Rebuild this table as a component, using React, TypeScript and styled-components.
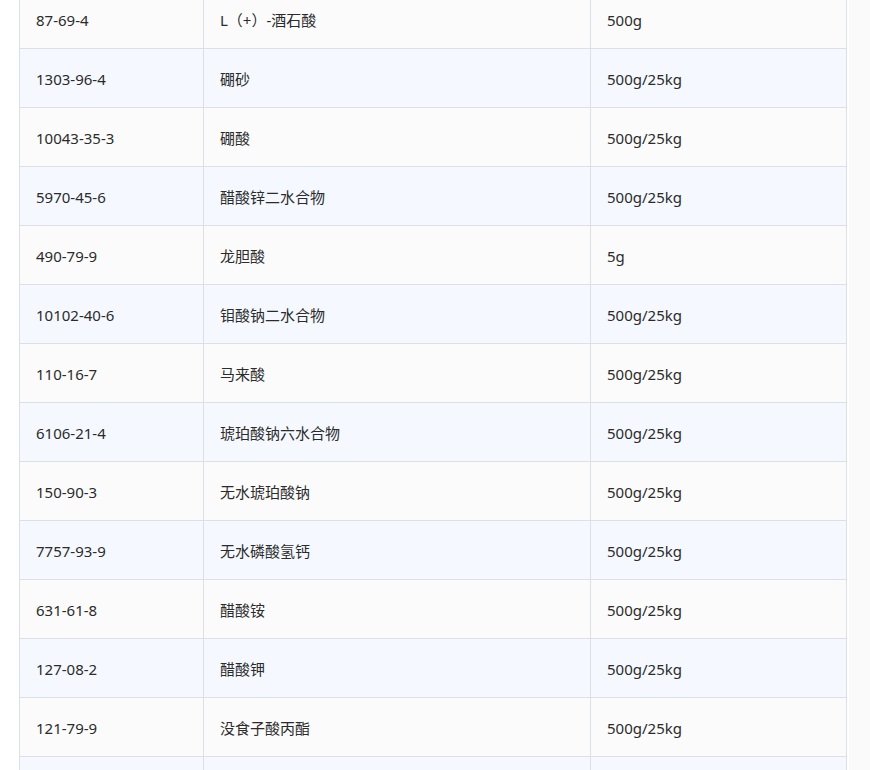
import React from "react";
import styled, { createGlobalStyle } from "styled-components";

const Global = createGlobalStyle`
  html, body { margin: 0; padding: 0; background: #fafafa; overflow: hidden; }
  body { font-family: "Noto Sans", "Noto Sans CJK SC", sans-serif; }
`;

const Page = styled.div`
  width: 849px;
  background: #ffffff;
  padding-left: 19px;
  box-sizing: border-box;
  height: 770px;
  overflow: hidden;
`;

const Table = styled.table`
  margin-top: -11px;
  width: 827px;
  border-collapse: collapse;
  table-layout: fixed;
  font-size: 15px;
  color: #2b2b2b;
`;

const Row = styled.tr<{ $alt: boolean }>`
  background: ${(p) => (p.$alt ? "#f5f9ff" : "#fbfbfb")};
`;

const Cell = styled.td`
  border: 1px solid #dcdfe6;
  height: 59px;
  padding: 2px 16px 0 16px;
  box-sizing: border-box;
  vertical-align: middle;
  line-height: 20px;
  white-space: nowrap;
`;

const rows: [string, string, string][] = [
  ["87-69-4", "L（+）-酒石酸", "500g"],
  ["1303-96-4", "硼砂", "500g/25kg"],
  ["10043-35-3", "硼酸", "500g/25kg"],
  ["5970-45-6", "醋酸锌二水合物", "500g/25kg"],
  ["490-79-9", "龙胆酸", "5g"],
  ["10102-40-6", "钼酸钠二水合物", "500g/25kg"],
  ["110-16-7", "马来酸", "500g/25kg"],
  ["6106-21-4", "琥珀酸钠六水合物", "500g/25kg"],
  ["150-90-3", "无水琥珀酸钠", "500g/25kg"],
  ["7757-93-9", "无水磷酸氢钙", "500g/25kg"],
  ["631-61-8", "醋酸铵", "500g/25kg"],
  ["127-08-2", "醋酸钾", "500g/25kg"],
  ["121-79-9", "没食子酸丙酯", "500g/25kg"],
  ["", "", ""],
];

export default function App() {
  return (
    <>
      <Global />
      <Page>
        <Table>
          <colgroup>
            <col style={{ width: 184 }} />
            <col style={{ width: 387 }} />
            <col style={{ width: 256 }} />
          </colgroup>
          <tbody>
            {rows.map((r, i) => (
              <Row key={i} $alt={i % 2 === 1}>
                <Cell>{r[0]}</Cell>
                <Cell>{r[1]}</Cell>
                <Cell>{r[2]}</Cell>
              </Row>
            ))}
          </tbody>
        </Table>
      </Page>
    </>
  );
}
